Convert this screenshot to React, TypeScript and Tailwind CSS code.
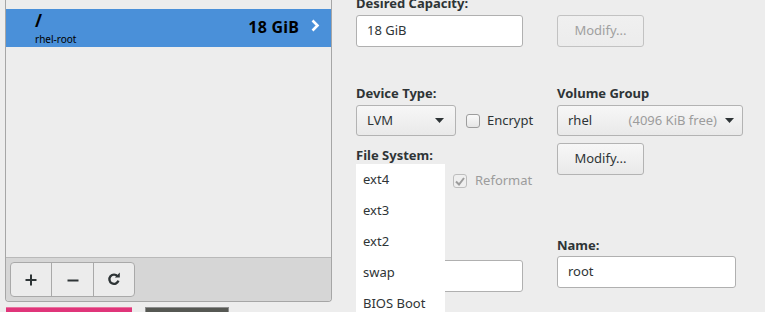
import React from "react";

const font = { fontFamily: '"Noto Sans", "DejaVu Sans", sans-serif' };

function Caret() {
  return (
    <svg width="9" height="5" viewBox="0 0 9 5" className="shrink-0">
      <path d="M0 0 H9 L4.5 5 Z" fill="#2e3436" />
    </svg>
  );
}

function Btn({ children, disabled, w }: { children: React.ReactNode; disabled?: boolean; w: string }) {
  return (
    <div
      className={`${w} h-[32px] rounded-[3px] border bg-gradient-to-b flex items-center justify-center text-[13px] ${
        disabled ? "text-[#a0a0a0] from-[#f0f0f0] to-[#ececec] border-[#c2c2c2]" : "text-[#2e3436] from-[#f7f7f7] to-[#e9e9e9] border-[#b3b3b3]"
      }`}
    >
      {children}
    </div>
  );
}

export default function App() {
  return (
    <div className="w-[765px] h-[312px] bg-[#ededed] overflow-hidden relative flex items-start text-[#2e3436]" style={font}>
      {/* Left column */}
      <div className="flex flex-col pl-[5px] shrink-0">
        <div className="w-[327px] h-[302px] border-x border-b border-[#a6a6a6] rounded-b-[4px] flex flex-col overflow-hidden">
          <div className="flex-1 flex flex-col pt-[9px] bg-[#ededed]">
            <div className="h-[38px] bg-[#4a90d9] flex items-center pl-[29px] pr-[11px]">
              <div className="flex flex-col flex-1">
                <div className="text-[17px] font-bold leading-[18px] text-black">/</div>
                <div className="text-[10px] leading-[12px] text-black mt-[3px]">rhel-root</div>
              </div>
              <div className="text-[16px] font-bold text-black -mt-[3px] tracking-[0.2px]">18 GiB</div>
              <svg width="10" height="13" viewBox="0 0 10 13" className="ml-[11px] -mt-[5px]">
                <path d="M2.5 1.5 L7.5 6.5 L2.5 11.5" stroke="white" strokeWidth="2.6" fill="none" />
              </svg>
            </div>
          </div>
          <div className="h-[44px] border-t border-[#b9b9b9] bg-[#d6d6d6] pl-[4px] pt-[4px]">
            <div className="w-[125px] h-[35px] rounded-[4px] border border-[#a9a9a9] bg-[#ececec] flex">
              <div className="w-[41px] flex items-center justify-center border-r border-[#a9a9a9]">
                <svg width="12" height="12" viewBox="0 0 12 12"><path d="M6 0.5 V11.5 M0.5 6 H11.5" stroke="#2e3436" strokeWidth="2" /></svg>
              </div>
              <div className="w-[42px] flex items-center justify-center border-r border-[#a9a9a9]">
                <svg width="12" height="12" viewBox="0 0 12 12"><path d="M0.5 6.5 H11.5" stroke="#2e3436" strokeWidth="2" /></svg>
              </div>
              <div className="flex-1 flex items-center justify-center">
                <svg width="14" height="14" viewBox="0 0 14 14" className="-mt-[1px]">
                  <path d="M10.6 4.4 A4.6 4.6 0 1 0 11.4 8.6" stroke="#2e3436" strokeWidth="2.4" fill="none" />
                  <path d="M7.8 5.4 L12.8 5.4 L12.8 0.6 Z" fill="#2e3436" />
                </svg>
              </div>
            </div>
          </div>
        </div>
        <div className="flex mt-[5px] items-start">
          <div className="ml-[1px] w-[126px] h-[10px] bg-[#e0357a] border-t border-[#e8739f]" />
          <div className="ml-[13px] w-[84px] h-[10px] bg-[#565853] border border-[#8d8d8d]" />
        </div>
      </div>

      {/* Right area */}
      <div className="ml-[24px] flex items-start gap-[34px]">
        {/* Column 1 */}
        <div className="w-[167px] flex flex-col -mt-[5px]">
          <div className="text-[13px] font-bold leading-[16px] h-[16px]">Desired Capacity:</div>
          <div className="mt-[4px] h-[32px] rounded-[3px] border border-[#b0b0b0] bg-white flex items-center pl-[10px] text-[13px]">18 GiB</div>
          <div className="mt-[38px] text-[13px] font-bold leading-[16px]">Device Type:</div>
          <div className="mt-[4px] flex items-center h-[31px]">
            <div className="w-[100px] shrink-0 h-[31px] rounded-[3px] border border-[#b3b3b3] bg-gradient-to-b from-[#f7f7f7] to-[#e9e9e9] flex items-center pl-[10px] pr-[11px] text-[13px]">
              <span className="flex-1">LVM</span>
              <Caret />
            </div>
            <div className="ml-[10px] shrink-0 w-[14px] h-[14px] rounded-[3px] border border-[#9d9d9d] bg-gradient-to-b from-[#fafafa] to-[#e6e6e6]" />
            <span className="ml-[7px] text-[13px] whitespace-nowrap">Encrypt</span>
          </div>
          <div className="mt-[11px] text-[13px] font-bold leading-[16px]">File System:</div>
          <div className="mt-[10px] flex items-center pl-[97px] h-[16px]">
            <div className="w-[14px] h-[14px] shrink-0 rounded-[3px] border border-[#bdbdbd] bg-[#efefef] flex items-center justify-center">
              <svg width="10" height="9" viewBox="0 0 10 9"><path d="M1 4.5 L4 7.5 L9 1" stroke="#9c9c9c" strokeWidth="2" fill="none" /></svg>
            </div>
            <span className="ml-[8px] text-[13px] text-[#9c9c9c]">Reformat</span>
          </div>
          <div className="mt-[71px] h-[32px] rounded-[3px] border border-[#b0b0b0] bg-white" />
        </div>

        {/* Column 2 */}
        <div className="w-[186px] flex flex-col pt-[15px]">
          <Btn disabled w="w-[87px]">Modify...</Btn>
          <div className="mt-[38px] text-[13px] font-bold leading-[16px] h-[16px]">Volume Group</div>
          <div className="mt-[4px] h-[31px] rounded-[3px] border border-[#b3b3b3] bg-gradient-to-b from-[#f7f7f7] to-[#e9e9e9] flex items-center pl-[10px] pr-[8px] text-[13px]">
            <span className="flex-1">rhel</span>
            <span className="text-[#9c9c9c] mr-[8px]">(4096 KiB free)</span>
            <Caret />
          </div>
          <div className="mt-[7px]">
            <Btn w="w-[87px]">Modify...</Btn>
          </div>
          <div className="mt-[62px] text-[13px] font-bold leading-[16px]">Name:</div>
          <div className="mt-[3px] w-[179px] h-[32px] rounded-[3px] border border-[#b0b0b0] bg-white flex items-center pl-[10px] text-[13px]">root</div>
        </div>
      </div>

      {/* Popup menu */}
      <div className="absolute left-[356px] top-[164px] w-[89px] h-[160px] bg-white flex flex-col text-[13px]">
        {["ext4", "ext3", "ext2", "swap", "BIOS Boot"].map((t) => (
          <div key={t} className="h-[31px] flex items-center pl-[7px] shrink-0">{t}</div>
        ))}
      </div>
    </div>
  );
}
